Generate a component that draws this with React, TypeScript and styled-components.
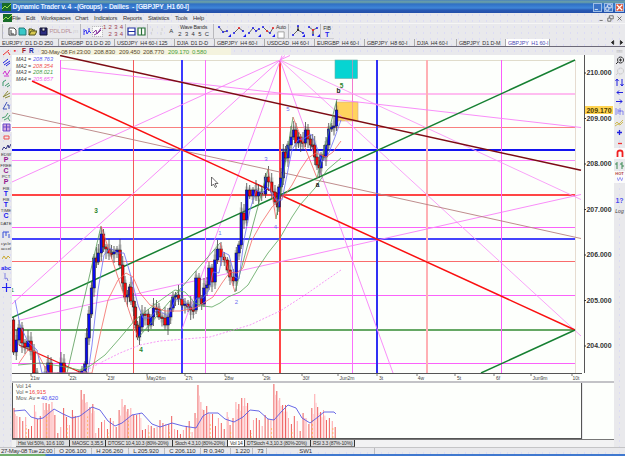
import React from "react";
import styled, { createGlobalStyle } from "styled-components";

const Global = createGlobalStyle`
  * { box-sizing: border-box; }
  body { margin: 0; overflow: hidden; }
`;

const Window = styled.div`
  width: 625px;
  height: 456px;
  display: flex;
  flex-direction: column;
  overflow: hidden;
  background-color: #e9e9ec;
  background-image: radial-gradient(#dcdcf4 0.6px, transparent 0.8px);
  background-size: 7px 6px;
  font: 6px/8px "Liberation Sans", Arial, sans-serif;
  color: #333;
  white-space: pre;
`;

const TitleBar = styled.header`
  height: 13px;
  flex: none;
  display: flex;
  align-items: center;
  padding: 1px 1px 0 2px;
  background: linear-gradient(#4a82bc 0, #6ea3a4 2px, #2f70c4 4px, #3f86d8 8px, #2759b4 10px, #2450a8 13px);
`;

const TitleText = styled.h1<{ $w: number; $spacing?: number }>`
  margin: 0;
  width: ${(p) => p.$w}px;
  flex: none;
  font: bold 6.8px/10px "Liberation Sans", Arial, sans-serif;
  letter-spacing: ${(p) => p.$spacing ?? -0.2}px;
  color: #e4efff;
`;

const WindowButtons = styled.div`
  margin-left: auto;
  display: flex;
  gap: 2px;
`;

const WinButton = styled.span<{ $close?: boolean }>`
  width: 9px;
  height: 9px;
  border: 1px solid #9dbde6;
  background: ${(p) => (p.$close ? "#d9583d" : "#3c74c6")};
  display: flex;
`;

const MenuBar = styled.nav`
  height: 10px;
  flex: none;
  display: flex;
  align-items: center;
  padding: 0 2px;
`;

const MenuItem = styled.span<{ $w: number }>`
  width: ${(p) => p.$w}px;
  flex: none;
  font-size: 5.8px;
  letter-spacing: -0.2px;
`;

const ToolBar = styled.div`
  height: 16px;
  flex: none;
  display: flex;
  align-items: center;
  padding-left: 2px;
  border-top: 1px solid #f6f6f6;
`;

const ToolGroup = styled.div<{ $w: number; $pad?: number }>`
  width: ${(p) => p.$w}px;
  padding-left: ${(p) => p.$pad ?? 0}px;
  height: 15px;
  flex: none;
  display: flex;
  align-items: center;
  border-left: 1px solid #b9b9bd;
  border-bottom: 1px solid #cfcfd2;
`;

const ToolCell = styled.span<{ $w: number; $color?: string; $on?: boolean }>`
  width: ${(p) => p.$w}px;
  flex: none;
  display: flex;
  justify-content: center;
  align-items: center;
  letter-spacing: -0.3px;
  color: ${(p) => p.$color ?? "#333"};
  background: ${(p) => (p.$on ? "#fafafa" : "transparent")};
  outline: ${(p) => (p.$on ? "1px dotted #bbb" : "none")};
`;

const DigitGrid = styled.div`
  width: 23px;
  display: grid;
  grid-template-columns: repeat(4, 5.6px);
  line-height: 7px;
  padding-left: 1px;
  color: #a04050;
`;

const WaveBands = styled.div`
  width: 35px;
  display: flex;
  flex-direction: column;
  align-items: center;
  line-height: 7px;
  font-size: 5.2px;
  letter-spacing: -0.2px;
`;

const Digits = styled.div`
  display: flex;
  gap: 3.6px;
  font-size: 5.8px;
`;

const TabStrip = styled.div`
  height: 8px;
  flex: none;
  display: flex;
  align-items: center;
  border-bottom: 1px solid #6d6a78;
  font-size: 5.4px;
  letter-spacing: -0.1px;
`;

const Tab = styled.span<{ $w: number; $active?: boolean }>`
  width: ${(p) => p.$w}px;
  height: 7px;
  line-height: 8px;
  padding-left: 2px;
  flex: none;
  border-right: 1px solid #aaa;
  color: ${(p) => (p.$active ? "#4a4ab4" : "#333")};
  background: ${(p) => (p.$active ? "#fff" : "transparent")};
`;

const InfoBar = styled.div`
  height: 8px;
  flex: none;
  display: flex;
  align-items: center;
  padding-left: 12px;
  font-size: 6px;
`;

const InfoFlag = styled.span<{ $w: number; $color: string }>`
  width: ${(p) => p.$w}px;
  font-weight: bold;
  font-size: 6.5px;
  color: ${(p) => p.$color};
`;

const Quote = styled.div`
  width: 190px;
  height: 7px;
  line-height: 8px;
  display: flex;
  background: #f4f3de;
`;

const QuoteCell = styled.span<{ $w: number; $color?: string }>`
  width: ${(p) => p.$w}px;
  flex: none;
  letter-spacing: ${(p) => (p.$w > 30 ? -0.25 : -0.1)}px;
  color: ${(p) => p.$color ?? "#5a4a30"};
`;

const Body = styled.div`
  height: 392px;
  flex: none;
  display: flex;
`;

const LeftTools = styled.aside`
  width: 12px;
  flex: none;
  display: flex;
  flex-direction: column;
  align-items: center;
  overflow: hidden;
  margin-top: -8px;
  font: 4.3px/5px "Liberation Sans", Arial, sans-serif;
`;

const SideCell = styled.span<{ $h: number; $on?: boolean }>`
  width: 11px;
  height: ${(p) => p.$h}px;
  flex: none;
  display: flex;
  flex-direction: column;
  align-items: center;
  justify-content: center;
  background: ${(p) => (p.$on ? "#fbfbfb" : "transparent")};
`;

const SideLetter = styled.b<{ $color: string; $size?: number }>`
  font-size: ${(p) => p.$size ?? 7}px;
  font-style: normal;
  line-height: 6px;
  color: ${(p) => p.$color};
`;

const HotLabel = styled.b`
  font: bold 4px/4px "Liberation Sans", Arial, sans-serif;
  color: #b04040;
`;

const Charts = styled.main`
  width: 602px;
  flex: none;
  display: flex;
  flex-direction: column;
`;

const ChartSvg = styled.svg`
  display: block;
  flex: none;
  font-family: "Liberation Sans", Arial, sans-serif;
`;

const StudyTabs = styled.div`
  height: 8px;
  flex: none;
  display: flex;
  padding-left: 4px;
  border-top: 1px solid #777;
  font-size: 5px;
  letter-spacing: -0.22px;
  line-height: 7px;
  background: #f2f2f3;
`;

const StudyTab = styled.span<{ $w: number; $active?: boolean }>`
  width: ${(p) => p.$w}px;
  height: 7px;
  flex: none;
  padding-left: 2px;
  background: ${(p) => (p.$active ? "#fff" : "#dededf")};
  border-bottom: 1px solid #777;
  border-right: 1px solid #333;
`;

const RightTools = styled.aside`
  width: 11px;
  flex: none;
  display: flex;
  flex-direction: column;
  align-items: center;
  overflow: hidden;
  margin-top: -7px;
  font: italic 5px/6px "Liberation Sans", Arial, sans-serif;
`;

const StatusBar = styled.footer`
  height: 7px;
  flex: none;
  display: flex;
  font-size: 6px;
  line-height: 7px;
  letter-spacing: -0.1px;
  border-top: 1px solid #c4c4c6;
`;

const StatusCell = styled.span<{ $w: number }>`
  width: ${(p) => p.$w}px;
  flex: none;
  padding-left: 1px;
  letter-spacing: ${(p) => (p.$w === 55 ? -0.3 : -0.1)}px;
  border-right: 1px solid #bcbcc0;
`;

const TaskStrip = styled.div`
  height: 2px;
  flex: none;
  background: linear-gradient(90deg, #6fae6c 45px, #3f78cf 46px);
`;

type Pt = [number, number];
const poly = (pts: Pt[]) => pts.map((p) => p.join(",")).join(" ");

/* Horizontal and vertical levels: position, colour, thickness. */
type Level = [number, string, number];
const V_LEVELS: Level[] = [
  [60.5, "#fb5cfb", 1], [133.5, "#f45a5a", 1], [182, "#3a3aff", 2], [205.5, "#fb70fb", 1],
  [280, "#ff4545", 2], [352.5, "#fb70fb", 1], [377, "#3030f4", 2], [427, "#ffb0b4", 2],
  [501.5, "#fb5cfb", 1], [575.5, "#e6dcd0", 1],
];
const H_LEVELS: Level[] = [
  [94, "#ffbdf0", 2], [127.5, "#f98080", 1], [150, "#1414f0", 2], [160.5, "#fb8afb", 1],
  [195, "#ff4545", 2], [227.5, "#fb62fb", 1], [239, "#4444fc", 2], [261.5, "#f96c6c", 1],
  [295.5, "#fb62fb", 1], [330, "#65a865", 2], [363.5, "#fb62fb", 1],
];

/* Trend lines: x1, y1, x2, y2, colour, thickness. */
type Trend = [number, number, number, number, string, number];
const FAN: Trend[] = [
  [280, 60, 581, 199.5, "#f898f8", 0.9], [280, 60, 581, 336, "#f898f8", 0.9],
  [280, 60, 393, 373, "#f880f8", 0.9], [290, 55.5, 12, 182, "#f880f8", 0.9],
  [285, 55.5, 12, 304, "#f880f8", 0.9], [282, 55.5, 182, 329, "#f880f8", 0.9],
  [20, 320, 581, 194.5, "#f880f8", 0.9], [60, 68, 581, 127.5, "#f880f8", 0.9],
  [12, 113, 581, 238.5, "#b88080", 0.9],
];
const TRENDS: Trend[] = [
  [60, 55.5, 581, 170.3, "#7c0c14", 1.5], [32, 81, 575, 330, "#fa1010", 1.5],
  [12, 317.6, 575, 60, "#168032", 1.5], [481, 373, 575, 330, "#168032", 1.5],
  [19, 345, 82, 373, "#fa1010", 1.3],
];

const SWINGS: [Pt, Pt, string][] = [
  [[67, 373], [101, 226], "#559955"], [[101, 226], [138, 338], "#f06060"],
  [[138, 338], [220, 243], "#559955"], [[220, 243], [235, 292], "#f06060"],
  [[235, 292], [268, 169], "#559955"], [[268, 169], [276, 219], "#f06060"],
  [[276, 219], [293, 117], "#559955"], [[293, 117], [317, 178], "#f06060"],
  [[317, 178], [337, 99], "#559955"],
];

const MA_FAST: Pt[] = [
  [15, 300], [20, 325], [28, 342], [37, 350], [42, 373], [88, 373], [92, 345], [98, 290], [104, 255],
  [110, 248], [118, 253], [124, 253], [130, 273], [138, 305], [143, 318], [150, 318], [157, 310],
  [163, 313], [168, 316], [175, 300], [182, 298], [190, 309], [197, 298], [203, 298], [209, 290],
  [213, 272], [219, 273], [223, 252], [229, 255], [235, 277], [239, 279], [244, 240], [250, 210],
  [256, 190], [262, 193], [268, 187], [276, 200], [282, 200], [287, 175], [292, 150], [298, 140],
  [305, 138], [311, 134], [316, 145], [322, 162], [328, 155], [335, 137], [341, 120],
];
const MA_MID: Pt[] = [
  [19, 363], [28, 350], [37, 352], [48, 373], [92, 373], [100, 335], [108, 300], [118, 280], [126, 273],
  [133, 277], [140, 293], [150, 305], [165, 311], [180, 311], [195, 308], [205, 302], [213, 297],
  [222, 283], [230, 272], [237, 273], [243, 268], [252, 240], [262, 222], [272, 207], [285, 195],
  [292, 185], [300, 170], [308, 158], [316, 153], [326, 157], [333, 152], [341, 141],
];
const MA_SLOW: Pt[] = [
  [18, 365], [40, 363], [60, 366], [80, 370], [90, 366], [105, 355], [120, 338], [135, 320], [150, 308],
  [165, 297], [175, 290], [185, 292], [195, 303], [203, 306], [212, 307], [220, 303], [228, 297],
  [240, 292], [248, 285], [258, 268], [268, 253], [280, 238], [292, 217], [300, 205], [315, 188],
  [327, 170], [341, 158],
];
const MA_LONG: Pt[] = [
  [83, 372], [100, 363], [120, 353], [140, 345], [160, 341], [185, 339], [210, 337], [230, 331],
  [250, 325], [280, 311], [305, 295], [325, 281], [341, 270],
];

/* Closing prices as chart points; each candle opens at the previous close. */
const CLOSES: Pt[] = [
  [11, 320], [13.5, 352], [16.3, 340], [19, 328], [22, 343], [25, 347], [28, 341], [31, 351], [34, 373],
  [37, 380], [42, 380], [45, 376], [48, 363], [51, 376], [58, 378], [61, 363], [64, 380], [79, 377],
  [82, 371], [85, 364], [86.5, 338], [89, 314], [91.5, 288], [94, 258], [96.5, 262], [98.3, 253],
  [101.3, 234], [103.5, 247], [106, 249], [109, 253], [111.5, 254], [114, 252], [117, 250], [120, 265],
  [122.7, 283], [125, 297], [127.5, 295], [129.5, 287], [131, 301], [133.5, 307], [135.5, 325],
  [137.5, 337], [139.5, 327], [142, 314], [145, 314], [148.3, 325], [151, 317], [153.5, 308],
  [156.5, 309], [159, 317], [162, 318], [165, 325], [168, 317], [170.7, 308], [173, 297], [175.5, 295],
  [178.5, 299], [182, 305], [185, 304], [188, 307], [190.7, 310], [193.3, 310], [196, 278], [199, 298],
  [201.7, 304], [204, 288], [207, 285], [209, 268], [212, 282], [215, 260], [217.5, 249], [221, 257],
  [224.3, 260], [227.3, 270], [230, 277], [233.3, 281], [236.3, 253], [239, 245], [241.3, 213],
  [244, 220], [246.7, 190], [249.7, 196], [253, 190], [256, 196], [258.5, 192], [261.7, 194],
  [265.5, 177], [268.5, 182], [271.7, 192], [275, 202], [277.5, 207], [279, 187], [281, 178],
  [283.3, 152], [285.5, 158], [288, 145], [291, 137], [293.7, 130], [296, 143], [298.5, 137],
  [300.7, 142], [303, 143], [305.5, 130], [308, 139], [310.5, 145], [312.7, 145], [314.7, 157],
  [317, 165], [319.3, 168], [321, 155], [323.7, 157], [326, 145], [328.7, 129], [331.7, 127],
  [334, 126], [336.5, 110],
];

const VOLUMES = [
  30, 22, 21, 17, 21, 9, 12, 33, 19, 22, 35, 35, 34, 36, 23, 5, 11, 30, 21, 13, 28, 22, 21, 48, 44, 36,
  31, 34, 5, 10, 16, 18, 9, 20, 17, 11, 28, 39, 33, 29, 30, 23, 23, 25, 8, 9, 13, 12, 10, 11, 18, 15,
  14, 14, 22, 9, 8, 4, 8, 12, 17, 6, 25, 53, 36, 28, 32, 24, 24, 12, 20, 15, 9, 26, 13, 20, 36, 34, 40,
  40, 35, 8, 18, 20, 18, 12, 23, 19, 18, 54, 47, 40, 33, 33, 20, 14, 22, 17, 7, 25, 20, 14, 30, 44, 31,
  26, 28, 18, 20, 17, 11,
];
const VOLUME_AVG: Pt[] = [
  [14, 411], [25, 410], [31, 417], [38, 419], [43, 418], [54, 409], [63, 414], [72, 418], [80, 416],
  [92, 407], [100, 410], [108, 421], [115, 426], [122, 423], [132, 415], [142, 413], [152, 424],
  [160, 427], [172, 423], [183, 426], [196, 428], [203, 416], [208, 413], [218, 413], [225, 419],
  [234, 422], [243, 417], [250, 410], [259, 411], [268, 419], [274, 420], [282, 411], [288, 405],
  [296, 408], [302, 418], [310, 423], [318, 417], [324, 412], [334, 412], [336, 414],
];

const WAVE_LABELS: [number, number, string, string, number][] = [
  [96, 213, "3", "#2c862c", 6.5], [141, 352, "4", "#2c862c", 6.5], [341.5, 88, "5", "#2c862c", 6.5],
  [338.5, 92.5, "b", "#111", 6.5], [317.5, 187, "a", "#111", 6.5], [220, 235, "1", "#7070f0", 6],
  [236.5, 303.5, "2", "#7070f0", 6], [266, 160.5, "3", "#7070f0", 6], [275.5, 229, "4", "#7070f0", 6],
  [288, 111, "5", "#7070f0", 6], [12.5, 292, "1", "#2c862c", 6],
];

const AXIS_DATES: [number, string][] = [
  [35, "21w"], [73, "22t"], [111, "23f"], [156, "May26m"], [189, "27t"], [229, "28w"], [267, "29t"],
  [306, "30f"], [347, "Jun2m"], [381, "3t"], [421, "4w"], [459, "5t"], [498, "6f"], [540, "Jun9m"], [576, "10t"],
];

const PRICES: [number, string][] = [
  [73, "210.000"], [118.5, "209.000"], [164, "208.000"], [209.5, "207.000"], [255, "206.000"],
  [300.5, "205.000"], [346, "204.000"],
];

const MA_VALUES: [string, string, string][] = [
  ["MA1 =", "208.763", "#5a5af0"], ["MA2 =", "208.354", "#f05050"],
  ["MA3 =", "208.021", "#3f9a3f"], ["MA4 =", "205.657", "#f060f0"],
];

const Candles = () => (
  <g>
    {CLOSES.slice(1).map(([x, close], i) => {
      const open = CLOSES[i][1];
      const up = close < open;
      const top = Math.min(open, close);
      const h = Math.max(1.5, Math.abs(open - close));
      const over = 3 + ((i * 7) % 9);
      const under = 3 + ((i * 5) % 8);
      return (
        <g key={i}>
          <rect x={x - 1.8} y={top - over / 2} width={3.6} height={h + (over + under) / 2} fill="#777" opacity={0.25} />
          <path d={`M${x} ${top - over}V${top + h + under}`} stroke="#444" strokeWidth={0.8} />
          <rect x={x - 1.3} y={top} width={2.6} height={h} fill={up ? "#0a0af0" : "#f20808"} stroke="#181820" strokeWidth={0.5} />
        </g>
      );
    })}
  </g>
);

const PriceChart = () => (
  <ChartSvg width={602} height={328} viewBox="12 55 602 328">
    <defs>
      <clipPath id="plot"><rect x={12} y={55} width={570} height={318} /></clipPath>
    </defs>
    <rect x={12} y={55} width={602} height={326} fill="#fdfffc" />
    <path d="M60 60.5H575" stroke="#e0dccb" />
    <g clipPath="url(#plot)">
      {H_LEVELS.map(([y, c, w]) => <path key={y} d={`M12 ${y}H575`} stroke={c} strokeWidth={w} />)}
      {V_LEVELS.map(([x, c, w]) => <path key={x} d={`M${x} 60V373`} stroke={c} strokeWidth={w} />)}
      <rect x={335} y={60} width={22.5} height={18.5} fill="#06d4d2" stroke="#6cb0a8" strokeWidth={0.6} />
      <rect x={336.5} y={102} width={21.5} height={19} fill="#ffd35e" stroke="#d0a890" strokeWidth={0.6} />
      <path d="M352.5 60V122" stroke="#f080b0" strokeWidth={0.6} />
      {FAN.map(([a, b, c, d, s, w], i) => <path key={i} d={`M${a} ${b}L${c} ${d}`} stroke={s} strokeWidth={w} />)}
      {TRENDS.map(([a, b, c, d, s, w], i) => <path key={i} d={`M${a} ${b}L${c} ${d}`} stroke={s} strokeWidth={w} />)}
      <Candles />
      <g fill="none" strokeWidth={0.8}>
        {SWINGS.map(([a, b, c], i) => <path key={i} d={`M${a}L${b}`} stroke={c} />)}
        <polyline points={poly(MA_FAST)} stroke="#6c6cf6" />
        <polyline points={poly(MA_MID)} stroke="#f46a64" />
        <polyline points={poly(MA_SLOW)} stroke="#5ca45c" />
        <polyline points={poly(MA_LONG)} stroke="#f480f4" strokeDasharray="2 1.5" />
      </g>
    </g>
    {WAVE_LABELS.map(([x, y, t, c, s], i) => (
      <text key={i} x={x} y={y} fill={c} fontSize={s} fontWeight={s > 6 ? 700 : 400} textAnchor="middle">{t}</text>
    ))}
    {MA_VALUES.map(([k, v, c], i) => (
      <g key={k} fontSize={6} fontStyle="italic">
        <text x={16} y={61 + i * 6.5} fill="#333" textLength={15} lengthAdjust="spacingAndGlyphs">{k}</text>
        <text x={33} y={61 + i * 6.5} fill={c} textLength={20} lengthAdjust="spacingAndGlyphs">{v}</text>
      </g>
    ))}
    <path d="M211.500 177v9l2-2 1.800 3.500 1.300-.8-1.600-3.200h3z" fill="#fff" stroke="#333" strokeWidth={0.7} />
    <path d="M12 373.500H582" stroke="#555" />
    <path d="M584.500 55V373" stroke="#555" />
    {AXIS_DATES.map(([x, t]) => (
      <g key={t}>
        <path d={`M${x - (t.length > 3 ? 9 : 4)} 374v2`} stroke="#555" strokeWidth={0.8} />
        <text x={x} y={380} fontSize={5} fill="#444" textAnchor="middle">{t}</text>
      </g>
    ))}
    <rect x={585} y={106} width={28} height={8} fill="#ffd452" />
    {PRICES.map(([y, t]) => (
      <g key={t}>
        <path d={`M584 ${y}h2`} stroke="#333" />
        <text x={586.5} y={y + 2.3} fontSize={6.5} fontWeight={700} fill="#333" textLength={25} lengthAdjust="spacingAndGlyphs">{t}</text>
      </g>
    ))}
    <text x={586.5} y={112.7} fontSize={6.5} fontWeight={700} fill="#4a3c00" textLength={25} lengthAdjust="spacingAndGlyphs">209.170</text>
    <path d="M12 382H614" stroke="#c3c3c7" strokeWidth={2} />
  </ChartSvg>
);

const VolumeChart = () => (
  <ChartSvg width={602} height={56} viewBox="12 383 602 56">
    <rect x={12.5} y={382.5} width={569} height={56} fill="#fdfffc" stroke="#555" />
    <rect x={583} y={383} width={31} height={56} fill="#fdfffc" />
    {VOLUMES.map((v, i) => {
      const x = 14 + i * 2.92;
      return (
        <g key={i}>
          <path d={`M${x} 438v${-v}`} stroke={i % 3 === 1 ? "#ffa4a8" : "#ee5c5c"} strokeWidth={1} />
          {v > 24 && <path d={`M${x + 1.3} 438v${-v * 0.8}`} stroke="#ffc4c8" strokeWidth={1} />}
          {i % 7 === 4 && <path d={`M${x + 0.6} 438v${-v * 0.6}`} stroke="#ffb03c" strokeWidth={0.7} strokeDasharray="2 2" />}
        </g>
      );
    })}
    <polyline points={poly(VOLUME_AVG)} fill="none" stroke="#5858e4" strokeWidth={0.9} />
    <g fontSize={5.8}>
      <text x={16} y={388} fill="#555" textLength={15} lengthAdjust="spacingAndGlyphs">Vol 14</text>
      <text x={16} y={394} fill="#555" textLength={12} lengthAdjust="spacingAndGlyphs">Vol =</text>
      <text x={29} y={394} fill="#f03c3c" textLength={17} lengthAdjust="spacingAndGlyphs">16,915</text>
      <text x={16} y={400} fill="#555" textLength={24} lengthAdjust="spacingAndGlyphs">Mov. Av =</text>
      <text x={41} y={400} fill="#4646ee" textLength={17} lengthAdjust="spacingAndGlyphs">40,620</text>
    </g>
  </ChartSvg>
);

/* Small two-tone glyphs for the tool bars. */
const Glyph = ({ d, c = "#2020e0", w = 1, f = "none", size = 9 }: { d: string; c?: string; w?: number; f?: string; size?: number }) => (
  <svg width={size} height={size} viewBox="0 0 9 9" fill={f} stroke={c} strokeWidth={w}><path d={d} /></svg>
);

const Zigzag = ({ pts, dot }: { pts: Pt[]; dot: string }) => (
  <svg width={13} height={12} viewBox="0 0 13 12">
    <polyline points={poly(pts)} fill="none" stroke="#555" strokeWidth={0.9} />
    {pts.map(([x, y], i) => <rect key={i} x={x - 0.9} y={y - 0.9} width={1.8} height={1.8} fill={i % 2 ? dot : "#2828e8"} />)}
    <path d="M13 9V12H10z" fill="#1818f0" />
  </svg>
);

const Logo = () => (
  <svg width={9} height={8} viewBox="0 0 9 8">
    <rect width={9} height={8} fill="#176b28" />
    <path d="M0 6L3 3l2 2 4-4" fill="none" stroke="#9be04c" />
  </svg>
);

const MENUS: [string, number][] = [
  ["File", 14], ["Edit", 15], ["Workspaces", 34], ["Chart", 19], ["Indicators", 29], ["Reports", 25],
  ["Statistics", 27], ["Tools", 18], ["Help", 20],
];
const TABS: [string, number][] = [
  ["EURJPY  D1 D-D 250", 59], ["EURGBP  D1 D-D 20", 56], ["USDJPY  H4 60-I 125", 60], ["DJIA  D1 D-D", 40],
  ["GBPJPY  H4 60-I", 50], ["USDCAD  H4 60-I", 50], ["EURGBP  H4 60-I", 50], ["GBPJPY  H8 60-I", 50],
  ["DJIA  H4 60-I", 42], ["GBPJPY  D1 D-M", 49],
];
const STUDIES: [string, number, boolean?][] = [
  ["Hist Vol 50%, 10.6 100", 54], ["MAOSC 3,35,5", 36], ["DTOSC 10.4,10.3 (80%-20%)", 67],
  ["Stoch 4.3,10 (80%-20%)", 55], ["Vol 14", 17, true], ["DTStoch 4.3,10.3 (80%-20%)", 66], ["RSI 3.3 (87%-10%)", 44],
];
const STATUS: [string, number][] = [
  ["27-May-08 Tue 22:00", 55], ["  O 206.100", 37], ["  H 206.260", 37], ["  L 205.920", 36],
  ["  C 206.110", 36], [" R 0.340", 30], ["  1.220", 22], ["  73", 14],
];

const LeftBar = () => (
  <LeftTools>
    <SideCell $h={10}><Glyph d="M1 7L7 2M6 4l2 3" c="#f03030" /></SideCell>
    <SideCell $h={10}><Glyph d="M1 5l5-4M2 7l6-4M4 8l4-3" /></SideCell>
    <SideCell $h={10}><Glyph d="M1 6l2-3 2 4 3-5M2 8h5" c="#d030d0" /></SideCell>
    <SideCell $h={12}><Glyph d="M1 7V3l3-2M3 7l4-3M5 8l3-2" c="#38966a" /></SideCell>
    <SideCell $h={11}><Glyph d="M1 7L6 1M1 7l7-4M3 8l5-2" c="#8c8a3a" /></SideCell>
    <SideCell $h={11}><Glyph d="M1 8l4-7M1 8h4M5 4h2v4" c="#3c50b8" /></SideCell>
    <SideCell $h={11}><Glyph d="M0 6q4 0 6-5M2 8q4-1 6-5M6 6l2 3" c="#48a06a" /></SideCell>
    <SideCell $h={10} $on><Glyph d="M1 1h7v7H1zM1 4h7M4.500 1v7" c="#6848c8" f="#d8a8e0" /></SideCell>
    <SideCell $h={10}><Glyph d="M2 3h5v3H2z" c="#f05050" /></SideCell>
    <SideCell $h={10}><Glyph d="M0 7l2-3 2 2 2-4 1 3 2-4" c="#303080" /></SideCell>
    {[
      ["EDW", "P", "#90148c"], ["FREE", "C", "#90148c"], ["PCT", "P", "#90148c"],
      ["FIB", "T", "#1818f0"], ["FIB", "T", "#1818f0"], ["TIME", "C", "#1818f0"],
    ].map(([t, l, c], i) => (
      <SideCell key={i} $h={11.2}>{t}<SideLetter $color={c}>{l}</SideLetter></SideCell>
    ))}
    <SideCell $h={9}>DATE</SideCell>
    <SideCell $h={12}><Glyph d="M1 8V2M1 2h6M4 2v4M7 4v4" c="#3850d8" /></SideCell>
    <SideCell $h={12}>cycle<br />accel</SideCell>
    <SideCell $h={11}><Glyph d="M0 6l2-3 2 3 2-3 2 2" c="#c8a830" /></SideCell>
    <SideCell $h={9}><SideLetter $color="#2020f0" $size={5.8}>abc</SideLetter></SideCell>
    <SideCell $h={10}><Glyph d="M3 0v6l2-1 1 3" c="#8080e0" /></SideCell>
    <SideCell $h={11}><Glyph d="M4.500 0v9M0 4.500h9" c="#2424f0" w={1.2} /></SideCell>
  </LeftTools>
);

const RightBar = () => (
  <RightTools>
    <SideCell $h={6}><Glyph d="M0 4h9M0 6h9" c="#aaa" w={0.8} size={7} /></SideCell>
    <SideCell $h={12}><Glyph d="M5.500 1a3 3 0 1 0 .1 0M3 6L1 8M5.500 2.500v3M4 4h3" c="#333" /></SideCell>
    <SideCell $h={10}><Glyph d="M5.500 1a3 3 0 1 0 .1 0M3 6L1 8" c="#ccc" /></SideCell>
    <SideCell $h={12}><Glyph d="M2 8V1M0.500 3L2 1l1.500 2M7 1v7M5.500 6L7 8l1.500-2" /></SideCell>
    <SideCell $h={9}><Glyph d="M8 4.500H2M4 2.500l-2 2 2 2" /></SideCell>
    <SideCell $h={9}><Glyph d="M1 4.500h6M5 2.500l2 2-2 2" /></SideCell>
    <SideCell $h={11}><Glyph d="M1 1v7M3 2v5M3 4h3M5 1v7M5 4h3v4" c="#6c6cf0" w={0.8} /></SideCell>
    <SideCell $h={10}><Glyph d="M0 6l2-2 2 2 4-4M0 8l3-2 2 1 3-3" c="#c8b030" w={0.8} /></SideCell>
    <SideCell $h={11}><Glyph d="M4.500 2v5M2 4.500h5" w={1.3} /></SideCell>
    <SideCell $h={10}><Glyph d="M3 4.500h4" c="#f03030" w={1.3} /></SideCell>
    <SideCell $h={11} $on><Glyph d="M2.500 8V3.500q0-2 2.500-2t2.500 2V8" c="#f02020" w={1.8} /></SideCell>
    <SideCell $h={12}><Glyph d="M2 1v7M0 3h2M7 1v7M7 5h2M5 3h2" c="#3c8a54" /></SideCell>
    <SideCell $h={12} $on><HotLabel>HOT</HotLabel><Glyph size={6} d="M0 2l2 5 2.500-5L7 7l2-5" c="#6c6cf0" /></SideCell>
    <SideCell $h={13} />
    <SideCell $h={9}><SideLetter $color="#4a4af0">1?</SideLetter></SideCell>
    <SideCell $h={12}>Log</SideCell>
  </RightTools>
);

export default function App() {
  return (
    <Window>
      <Global />
      <TitleBar>
        <Logo />
        <TitleText $w={66} $spacing={-0.28}> Dynamic Trader v. 4  -</TitleText>
        <TitleText $w={32} $spacing={-0.5}>(Groups)  -</TitleText>
        <TitleText $w={27} $spacing={-0.3}>Dailies  -</TitleText>
        <TitleText $w={60} $spacing={-0.35}>[GBPJPY_H1 60-I]</TitleText>
        <WindowButtons>
          <WinButton><Glyph size={7} d="M1 7h4" c="#fff" /></WinButton>
          <WinButton><Glyph size={7} d="M1 4h4v4H1zM3 4V1h5v4H5" c="#fff" /></WinButton>
          <WinButton $close><Glyph size={7} d="M1 1l7 7M8 1L1 8" c="#fff" w={1.5} /></WinButton>
        </WindowButtons>
      </TitleBar>
      <MenuBar>
        <ToolCell $w={10}><Logo /></ToolCell>
        {MENUS.map(([t, w]) => <MenuItem key={t} $w={w}>{t}</MenuItem>)}
        <WindowButtons>
          <Glyph size={7} d="M2 7h4" c="#555" />
          <Glyph size={7} d="M1 4h4v4H1zM3 4V1h5v4H5" c="#555" />
          <Glyph size={7} d="M2 2l5 5M7 2L2 7" c="#555" />
        </WindowButtons>
      </MenuBar>
      <ToolBar>
        <ToolGroup $w={78} $pad={4}>
          <ToolCell $w={10}><Glyph d="M1 1h5l2 2v5H1zM3 3v4h3" c="#444" f="#fff" /></ToolCell>
          <ToolCell $w={10}><Glyph d="M1 1h5l2 2v5H1z" c="#287878" f="#38c8c8" /></ToolCell>
          <ToolCell $w={10}><Glyph d="M1 8V2h3l1 1h2M1 8l2-4h6L7 8z" c="#50501c" f="#d8c850" /></ToolCell>
          <ToolCell $w={12}><Glyph d="M1 1h7v7H1zM3 1v3h3V1" c="#101030" f="#2c2c80" /></ToolCell>
          <ToolCell $w={12} $color="#b89098">PDL</ToolCell>
          <ToolCell $w={11} $color="#b89098">DPL</ToolCell>
          <ToolCell $w={7} $color="#cfcfd2">m</ToolCell>
        </ToolGroup>
        <ToolGroup $w={45} $pad={1}>
          <ToolCell $w={11}><Glyph d="M1 2v6M1 5l2-2 1 4 2-3 2 2M6 1v4" c="#3838f0" /></ToolCell>
          <ToolCell $w={9} $on><Glyph d="M0 6l3-3 1 4 2-3 2-3M1 8l4-2 3-3" c="#8838a0" /></ToolCell>
          <DigitGrid>{["1", "2", "3", "4", "", "2", "3", "4"].map((n, i) => <span key={i}>{n}</span>)}</DigitGrid>
        </ToolGroup>
        <ToolGroup $w={22}>
          <ToolCell $w={10}><Glyph d="M1 1h7v7H1zM1 4.500h7" c="#2030a0" f="#fff" w={1.2} /></ToolCell>
          <ToolCell $w={10}><Glyph d="M1 1h7v7H1zM4.500 1v7" c="#287038" f="#fff" w={1.2} /></ToolCell>
        </ToolGroup>
        <ToolGroup $w={66}>
          <ToolCell $w={8}><Glyph d="M5 1v3M4 5v3" c="#d0d0d0" /></ToolCell>
          <ToolCell $w={10}><Glyph d="M5 1v3M4 5v3" c="#d0d0d0" /></ToolCell>
          <ToolCell $w={10}>A</ToolCell>
          <WaveBands>
            <span>Wave Bands</span>
            <Digits>{"2345C".split("").map((n) => <span key={n}>{n}</span>)}</Digits>
          </WaveBands>
        </ToolGroup>
        <ToolGroup $w={75} $pad={3}>
          <ToolCell $w={15}><Zigzag pts={[[1, 2], [5, 7], [9, 6]]} dot="#2828e8" /></ToolCell>
          <ToolCell $w={15}><Zigzag pts={[[1, 8], [6, 3], [10, 6]]} dot="#e82828" /></ToolCell>
          <ToolCell $w={14}><Zigzag pts={[[1, 8], [5, 3], [8, 6], [11, 4]]} dot="#2828e8" /></ToolCell>
          <ToolCell $w={14}><Zigzag pts={[[1, 2], [5, 6], [8, 8], [11, 3]]} dot="#e82828" /></ToolCell>
          <ToolCell $w={12}><WaveBands><span>Auto</span><Glyph size={8} d="M1 1h7v7H1z" c="#999" f="#fff" /></WaveBands></ToolCell>
        </ToolGroup>
        <ToolGroup $w={32} $pad={2}>
          <ToolCell $w={15}><Zigzag pts={[[1, 10], [6, 5], [6, 1], [6, 5], [11, 8]]} dot="#333" /></ToolCell>
          <ToolCell $w={14}><Zigzag pts={[[2, 2], [6, 5], [6, 10], [6, 5], [10, 3]]} dot="#e82828" /></ToolCell>
        </ToolGroup>
        <ToolGroup $w={14}>
          <ToolCell $w={12}><WaveBands>FIB<SideLetter $color="#2424f0">T</SideLetter></WaveBands></ToolCell>
        </ToolGroup>
      </ToolBar>
      <TabStrip>
        {TABS.map(([t, w]) => <Tab key={t} $w={w}>{t}</Tab>)}
        <Tab $w={44} $active>GBPJPY  H1 60-I</Tab>
        <WindowButtons>
          <Glyph size={7} d="M6 2v5L3 4.500z" c="#222" f="#222" />
          <Glyph size={7} d="M3 2v5l3-2.500z" c="#222" f="#222" />
        </WindowButtons>
      </TabStrip>
      <InfoBar>
        <InfoFlag $w={10} $color="#f02020"> ▪</InfoFlag>
        <InfoFlag $w={7} $color="#a01420">F</InfoFlag>
        <InfoFlag $w={12} $color="#2020a0">R</InfoFlag>
        <Quote>
          <QuoteCell $w={53}>30-May-08 Fri 23:00</QuoteCell>
          <QuoteCell $w={25}>208.830</QuoteCell>
          <QuoteCell $w={24}>209.450</QuoteCell>
          <QuoteCell $w={25}>208.770</QuoteCell>
          <QuoteCell $w={24} $color="#48a040">209.170</QuoteCell>
          <QuoteCell $w={20} $color="#48a040">0.580</QuoteCell>
        </Quote>
      </InfoBar>
      <Body>
        <LeftBar />
        <Charts>
          <PriceChart />
          <VolumeChart />
          <StudyTabs>
            {STUDIES.map(([t, w, a]) => <StudyTab key={t} $w={w} $active={a}>{t}</StudyTab>)}
          </StudyTabs>
        </Charts>
        <RightBar />
      </Body>
      <StatusBar>
        {STATUS.map(([t, w]) => <StatusCell key={t} $w={w}>{t}</StatusCell>)}
        <StatusCell $w={108}>                    SW1</StatusCell>
      </StatusBar>
      <TaskStrip />
    </Window>
  );
}
